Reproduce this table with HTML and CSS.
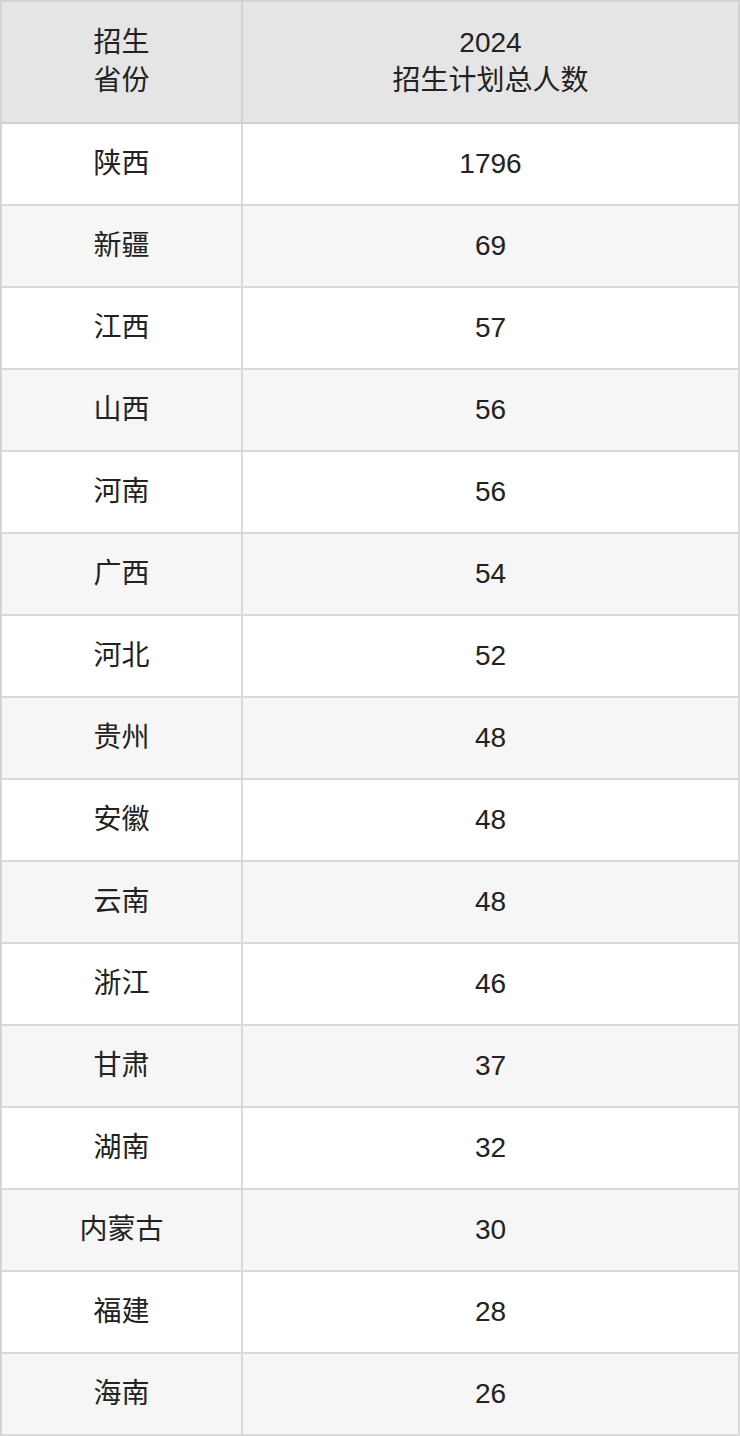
FILE: index.html
```html
<!DOCTYPE html>
<html lang="zh-CN">
<head>
<meta charset="utf-8">
<link rel="stylesheet" href="styles.css">
</head>
<body>
<table class="plan">
  <colgroup>
    <col class="c1">
    <col class="c2">
  </colgroup>
  <thead>
    <tr><th>招生<br>省份</th><th>2024<br>招生计划总人数</th></tr>
  </thead>
  <tbody>
    <tr><td>陕西</td><td>1796</td></tr>
    <tr><td>新疆</td><td>69</td></tr>
    <tr><td>江西</td><td>57</td></tr>
    <tr><td>山西</td><td>56</td></tr>
    <tr><td>河南</td><td>56</td></tr>
    <tr><td>广西</td><td>54</td></tr>
    <tr><td>河北</td><td>52</td></tr>
    <tr><td>贵州</td><td>48</td></tr>
    <tr><td>安徽</td><td>48</td></tr>
    <tr><td>云南</td><td>48</td></tr>
    <tr><td>浙江</td><td>46</td></tr>
    <tr><td>甘肃</td><td>37</td></tr>
    <tr><td>湖南</td><td>32</td></tr>
    <tr><td>内蒙古</td><td>30</td></tr>
    <tr><td>福建</td><td>28</td></tr>
    <tr><td>海南</td><td>26</td></tr>
  </tbody>
</table>
</body>
</html>
```
FILE: styles.css
```css
html, body {
  margin: 0;
  padding: 0;
  background: #ffffff;
}
.plan {
  width: 740px;
  table-layout: fixed;
  border-collapse: separate;
  border-spacing: 0;
  border-top: 2px solid #d4d4d4;
  border-left: 2px solid #d4d4d4;
  font-family: "Liberation Sans", "Noto Sans CJK SC", sans-serif;
  font-size: 28px;
  color: #222222;
}
.c1 { width: 241px; }
.c2 { width: 497px; }
.plan th,
.plan td {
  padding: 0;
  text-align: center;
  vertical-align: middle;
  border-right: 2px solid #dadada;
  border-bottom: 2px solid #dadada;
}
.plan th {
  height: 120px;
  line-height: 38px;
  font-weight: normal;
  background: #e5e5e5;
  border-color: #d2d2d2;
}
.plan td {
  height: 80px;
  line-height: 40px;
}
.plan tbody tr:nth-child(even) td {
  background: #f6f6f6;
}
```
